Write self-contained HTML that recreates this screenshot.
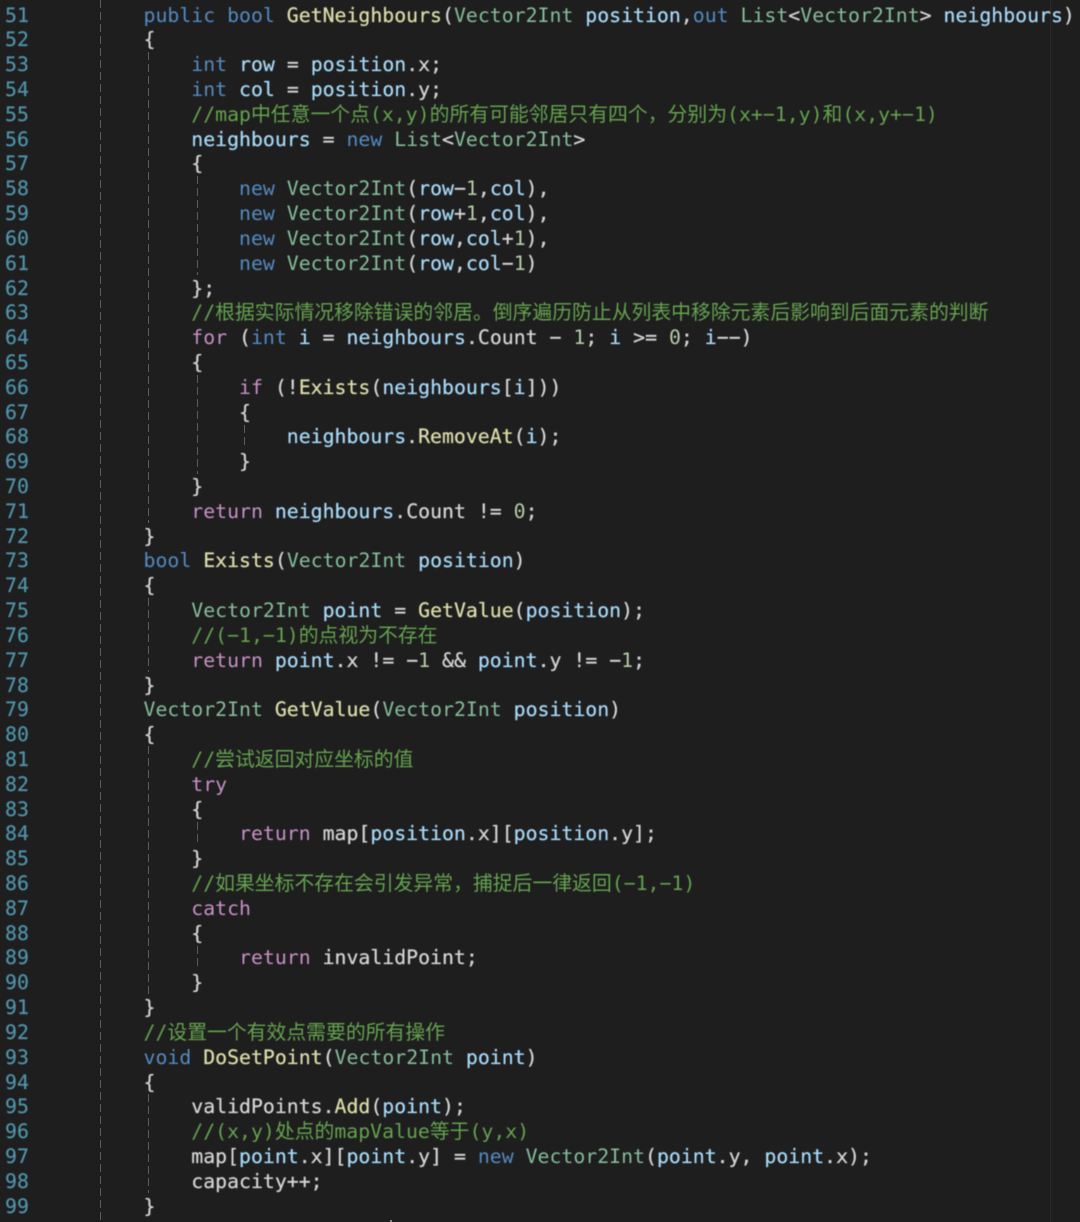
<!DOCTYPE html>
<html><head><meta charset="utf-8"><style>
html,body{margin:0;padding:0;background:#1e1e1e}
#w{position:relative;width:1080px;height:1222px;overflow:hidden;background:#1e1e1e}
pre{margin:0;position:absolute;top:3.6px;font:19.84px/24.81px "DejaVu Sans Mono","Noto Sans CJK SC",monospace;white-space:pre;filter:blur(.4px)}
#n{left:5px;color:#4f93ab;-webkit-text-stroke:.2px #4f93ab}
#c{left:143.5px;color:#d4d4d4;-webkit-text-stroke:.25px}
.k,.t,.m,.d,.p{-webkit-text-stroke:0}
.k{color:#548bc4}.t{color:#85bd9a}.v{color:#a6d8f7}.f{color:#dcdcaa}.m{color:#64a34f}.p{color:#c890c5}.d{color:#b5cea8}
.g{position:absolute;width:1px;background:repeating-linear-gradient(#5c5c5c 0 8px,transparent 8px 12px)}
#s{position:absolute;left:1050px;top:0;width:1px;height:1222px;background:#2a2a2a}
#e{position:absolute;left:390px;top:1220px;width:2px;height:2px;background:#888}
</style></head><body><div id="w">
<div id="s"></div>
<div id="e"></div>
<div class="g" style="left:100px;top:0;height:1222px"></div>
<div class="g" style="left:148px;top:52px;height:471px"></div>
<div class="g" style="left:148px;top:598px;height:74px"></div>
<div class="g" style="left:148px;top:746px;height:248px"></div>
<div class="g" style="left:148px;top:1094px;height:99px"></div>
<div class="g" style="left:197px;top:176px;height:99px"></div>
<div class="g" style="left:197px;top:375px;height:99px"></div>
<div class="g" style="left:197px;top:822px;height:24px"></div>
<div class="g" style="left:197px;top:946px;height:24px"></div>
<div class="g" style="left:244px;top:425px;height:24px"></div>
<pre id="n">51
52
53
54
55
56
57
58
59
60
61
62
63
64
65
66
67
68
69
70
71
72
73
74
75
76
77
78
79
80
81
82
83
84
85
86
87
88
89
90
91
92
93
94
95
96
97
98
99</pre>
<pre id="c"><span class="k">public bool</span> <span class="f">GetNeighbours</span>(<span class="t">Vector2Int</span> <span class="v">position</span>,<span class="k">out</span> <span class="t">List</span>&lt;<span class="t">Vector2Int</span>&gt; <span class="v">neighbours</span>)
{
    <span class="k">int</span> <span class="v">row</span> = <span class="v">position</span>.x;
    <span class="k">int</span> <span class="v">col</span> = <span class="v">position</span>.y;
    <span class="m">//map中任意一个点(x,y)的所有可能邻居只有四个，分别为(x+−1,y)和(x,y+−1)</span>
    <span class="v">neighbours</span> = <span class="k">new</span> <span class="t">List</span>&lt;<span class="t">Vector2Int</span>&gt;
    {
        <span class="k">new</span> <span class="t">Vector2Int</span>(<span class="v">row</span>−<span class="d">1</span>,<span class="v">col</span>),
        <span class="k">new</span> <span class="t">Vector2Int</span>(<span class="v">row</span>+<span class="d">1</span>,<span class="v">col</span>),
        <span class="k">new</span> <span class="t">Vector2Int</span>(<span class="v">row</span>,<span class="v">col</span>+<span class="d">1</span>),
        <span class="k">new</span> <span class="t">Vector2Int</span>(<span class="v">row</span>,<span class="v">col</span>−<span class="d">1</span>)
    };
    <span class="m">//根据实际情况移除错误的邻居。倒序遍历防止从列表中移除元素后影响到后面元素的判断</span>
    <span class="p">for</span> (<span class="k">int</span> <span class="v">i</span> = <span class="v">neighbours</span>.Count − <span class="d">1</span>; <span class="v">i</span> &gt;= <span class="d">0</span>; <span class="v">i</span>−−)
    {
        <span class="p">if</span> (!<span class="f">Exists</span>(<span class="v">neighbours</span>[<span class="v">i</span>]))
        {
            <span class="v">neighbours</span>.<span class="f">RemoveAt</span>(<span class="v">i</span>);
        }
    }
    <span class="p">return</span> <span class="v">neighbours</span>.Count != <span class="d">0</span>;
}
<span class="k">bool</span> <span class="f">Exists</span>(<span class="t">Vector2Int</span> <span class="v">position</span>)
{
    <span class="t">Vector2Int</span> <span class="v">point</span> = <span class="f">GetValue</span>(<span class="v">position</span>);
    <span class="m">//(−1,−1)的点视为不存在</span>
    <span class="p">return</span> <span class="v">point</span>.x != −<span class="d">1</span> &amp;&amp; <span class="v">point</span>.y != −<span class="d">1</span>;
}
<span class="t">Vector2Int</span> <span class="f">GetValue</span>(<span class="t">Vector2Int</span> <span class="v">position</span>)
{
    <span class="m">//尝试返回对应坐标的值</span>
    <span class="p">try</span>
    {
        <span class="p">return</span> map[<span class="v">position</span>.x][<span class="v">position</span>.y];
    }
    <span class="m">//如果坐标不存在会引发异常，捕捉后一律返回(−1,−1)</span>
    <span class="p">catch</span>
    {
        <span class="p">return</span> invalidPoint;
    }
}
<span class="m">//设置一个有效点需要的所有操作</span>
<span class="k">void</span> <span class="f">DoSetPoint</span>(<span class="t">Vector2Int</span> <span class="v">point</span>)
{
    validPoints.<span class="f">Add</span>(<span class="v">point</span>);
    <span class="m">//(x,y)处点的mapValue等于(y,x)</span>
    map[<span class="v">point</span>.x][<span class="v">point</span>.y] = <span class="k">new</span> <span class="t">Vector2Int</span>(<span class="v">point</span>.y, <span class="v">point</span>.x);
    capacity++;
}</pre>
</div></body></html>
